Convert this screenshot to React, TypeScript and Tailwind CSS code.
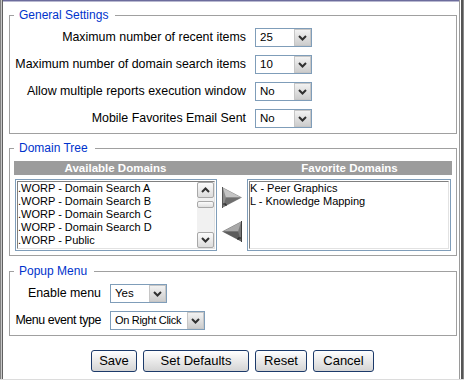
import React from "react";

const DropBtn = () => (
  <div className="flex h-[17px] w-[17px] shrink-0 items-center justify-center border border-[#c6c6c6] bg-linear-to-b from-[#f2f2f2] to-[#cdcdcd]">
    <svg width="9" height="6" viewBox="0 0 9 6">
      <path d="M1 1 L4.5 4.5 L8 1" stroke="#303030" strokeWidth="2" fill="none" />
    </svg>
  </div>
);

const Select = ({ cls, value, textCls = "" }: { cls: string; value: string; textCls?: string }) => (
  <div className={"flex h-[19px] border border-[#7f9db9] bg-white " + cls}>
    <span className={"flex-1 overflow-hidden whitespace-nowrap pl-[4px] text-[11.5px] leading-[17px] text-black " + textCls}>{value}</span>
    <DropBtn />
  </div>
);

const Legend = ({ children }: { children: React.ReactNode }) => (
  <legend className="ml-[4px] pl-[5px] pr-[7px] text-[12px] leading-[14px] text-[#0033cc]">{children}</legend>
);

const Btn = ({ cls, label }: { cls: string; label: string }) => (
  <button className={"h-[22px] rounded-[3px] border border-[#1c3a6a] bg-linear-to-b from-white to-[#d4d4d4] text-[13px] leading-[20px] text-black " + cls}>
    {label}
  </button>
);

const ScrollBtn = ({ up }: { up: boolean }) => (
  <div className="flex h-[16px] w-[17px] items-center justify-center rounded-[2px] border border-[#a8a8a8] bg-linear-to-b from-[#fbfbfb] to-[#dcdcdc]">
    <svg width="9" height="6" viewBox="0 0 9 6">
      <path d={up ? "M1 5 L4.5 1.5 L8 5" : "M1 1 L4.5 4.5 L8 1"} stroke="#303030" strokeWidth="2" fill="none" />
    </svg>
  </div>
);

const ArrowRight = () => (
  <svg width="20" height="21" viewBox="0 0 20 21">
    <polygon points="0,0 20,10.5 0,21" fill="#8c8c8c" />
    <polygon points="1,1 19,10.5 4,10.5" fill="#c4c4c4" />
    <polygon points="4,10.5 19,10.5 1,20" fill="#6e6e6e" />
    <line x1="0.5" y1="0" x2="0.5" y2="21" stroke="#555" />
    <polyline points="1,17 4,17 4,19" stroke="#202020" fill="none" />
  </svg>
);

const ArrowLeft = () => (
  <svg width="20" height="21" viewBox="0 0 20 21">
    <polygon points="20,0 0,10.5 20,21" fill="#7a7a7a" />
    <polygon points="19,1 1,10.5 16,10.5" fill="#a8a8a8" />
    <polygon points="16,10.5 1,10.5 19,20" fill="#5c5c5c" />
    <line x1="19.5" y1="0" x2="19.5" y2="21" stroke="#404040" />
    <polyline points="19,17 16,17 16,19" stroke="#202020" fill="none" />
  </svg>
);

export default function App() {
  const available = [
    ".WORP - Domain Search A",
    ".WORP - Domain Search B",
    ".WORP - Domain Search C",
    ".WORP - Domain Search D",
    ".WORP - Public",
  ];
  const favorites = ["K - Peer Graphics", "L - Knowledge Mapping"];

  return (
    <div className="flex h-[382px] w-[464px] flex-col bg-white font-['Liberation_Sans',Arial,sans-serif] text-black">
      <div className="flex h-[379px]">
        <div className="w-px bg-[#808080]" />
        <div className="w-px bg-[#c8c8c8]" />
        <div className="w-px bg-[#606060]" />
        <div className="flex flex-1 flex-col">
          <div className="h-px bg-[#6c6c9c]" />
          <div className="h-px bg-[#b8b8d0]" />

          {/* General Settings */}
          <fieldset className="ml-[6px] mt-[6px] w-[448px] border border-[#a0a0a0] pb-[5px] pt-[6px]">
            <Legend>General Settings</Legend>
            <div className="grid grid-cols-[236px_57px] items-center gap-x-[9px] gap-y-[8px]">
              <span className="text-right text-[12.4px] leading-[19px]">Maximum number of recent items</span>
              <Select cls="w-[57px]" value="25" />
              <span className="text-right text-[12.4px] leading-[19px]">Maximum number of domain search items</span>
              <Select cls="w-[57px]" value="10" />
              <span className="text-right text-[12.4px] leading-[19px]">Allow multiple reports execution window</span>
              <Select cls="w-[57px]" value="No" />
              <span className="text-right text-[12.4px] leading-[19px]">Mobile Favorites Email Sent</span>
              <Select cls="w-[57px]" value="No" />
            </div>
          </fieldset>

          {/* Domain Tree */}
          <fieldset className="ml-[6px] mt-[7px] w-[448px] border border-[#a0a0a0] pb-[4px] pt-[6px]">
            <Legend>Domain Tree</Legend>
            <div className="ml-[4px] w-[438px]">
              <div className="grid h-[14px] grid-cols-[203px_30px_205px] bg-[#9c9c9c] text-[11.5px] font-bold leading-[14px] text-white">
                <span className="text-center">Available Domains</span>
                <span />
                <span className="text-center">Favorite Domains</span>
              </div>
              <div className="mt-[4px] grid grid-cols-[203px_30px_205px]">
                <div className="ml-px h-[72px] w-[202px] border border-[#7f9db9] bg-white p-px">
                  <div className="flex h-full border border-b-[#e2e2e2] border-l-[#808080] border-r-[#e2e2e2] border-t-[#808080]">
                    <div className="flex-1 overflow-hidden text-[11px] leading-[13px]">
                      {available.map((a) => (
                        <div key={a} className="whitespace-nowrap">{a}</div>
                      ))}
                    </div>
                    <div className="flex w-[17px] flex-col bg-[#f1f1f1]">
                      <ScrollBtn up={true} />
                      <div className="mt-[3px] h-[7px] rounded-[2px] border border-[#a8a8a8] bg-linear-to-b from-[#fbfbfb] to-[#e0e0e0]" />
                      <div className="flex-1" />
                      <ScrollBtn up={false} />
                    </div>
                  </div>
                </div>
                <div className="flex flex-col items-center pt-[8px]">
                  <ArrowRight />
                  <div className="h-[13px]" />
                  <ArrowLeft />
                </div>
                <div className="h-[72px] w-[204px] border border-[#7f9db9] bg-white p-px">
                  <div className="h-full border border-b-[#e2e2e2] border-l-[#808080] border-r-[#e2e2e2] border-t-[#808080] text-[11px] leading-[13px]">
                    {favorites.map((f) => (
                      <div key={f} className="whitespace-nowrap">{f}</div>
                    ))}
                  </div>
                </div>
              </div>
            </div>
          </fieldset>

          {/* Popup Menu */}
          <fieldset className="ml-[6px] mt-[8px] w-[448px] border border-[#a0a0a0] pb-[5px] pt-[6px]">
            <Legend>Popup Menu</Legend>
            <div className="grid grid-cols-[91px_auto] items-center justify-start gap-x-[9px] gap-y-[8px]">
              <span className="text-right text-[12.4px] leading-[19px]">Enable menu</span>
              <Select cls="w-[57px]" value="Yes" />
              <span className="whitespace-nowrap text-right text-[12.4px] leading-[19px] tracking-[-0.4px]">Menu event type</span>
              <Select cls="w-[95px]" value="On Right Click" textCls="text-[11px] tracking-[-0.3px]" />
            </div>
          </fieldset>

          <div className="mt-[14px] flex gap-[6px] pl-[88px]">
            <Btn cls="w-[46px]" label="Save" />
            <Btn cls="w-[106px]" label="Set Defaults" />
            <Btn cls="w-[52px]" label="Reset" />
            <Btn cls="w-[61px]" label="Cancel" />
          </div>
        </div>
        <div className="w-px bg-[#9a9a9a]" />
        <div className="w-px bg-white" />
        <div className="w-[2px] bg-[#555555]" />
        <div className="w-px bg-[#8a8a8a]" />
      </div>
      <div className="h-px bg-[#dcdcdc]" />
    </div>
  );
}
